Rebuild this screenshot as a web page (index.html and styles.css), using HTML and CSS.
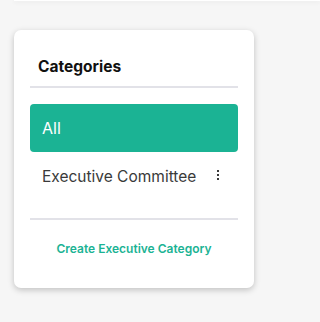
FILE: index.html
```html
<!DOCTYPE html>
<html lang="en">
<head>
<meta charset="utf-8">
<title>Categories</title>
<link rel="stylesheet" href="styles.css">
</head>
<body>
<div class="top-strip"></div>
<section class="card">
  <h2 class="card-title">Categories</h2>
  <ul class="cat-list">
    <li class="cat-item active"><span>All</span></li>
    <li class="cat-item">
      <span>Executive Committee</span>
      <svg class="kebab" width="16" height="16" viewBox="0 0 16 16" aria-hidden="true">
        <rect x="7" y="3" width="2" height="2" fill="#3a3a3a"/>
        <rect x="7" y="7" width="2" height="2" fill="#3a3a3a"/>
        <rect x="7" y="11" width="2" height="2" fill="#3a3a3a"/>
      </svg>
    </li>
  </ul>
  <div class="card-footer">
    <a class="create-link" href="#">Create Executive Category</a>
  </div>
</section>
</body>
</html>
```

FILE: styles.css
```css
html, body {
  margin: 0;
  padding: 0;
}
body {
  background: #f6f6f6;
  font-family: Inter, "Noto Sans", "Liberation Sans", sans-serif;
  min-height: 322px;
  overflow: hidden;
}
.top-strip {
  margin-left: 14px;
  height: 1px;
  background: #ffffff;
  box-shadow: 0 1px 4px rgba(0, 0, 0, 0.12);
}
.card {
  margin: 29px 0 0 14px;
  width: 240px;
  height: 258px;
  box-sizing: border-box;
  background: #ffffff;
  border-radius: 7px;
  box-shadow: 0 2px 6px rgba(0, 0, 0, 0.22);
  padding: 25px 16px 0 16px;
}
.card-title {
  margin: 0;
  padding: 0 0 7px 8px;
  font-size: 15.5px;
  line-height: 24px;
  font-weight: 700;
  color: #111111;
  border-bottom: 2px solid #e2e2e8;
}
.cat-list {
  list-style: none;
  margin: 16px 0 0 0;
  padding: 0 0 18px 0;
  border-bottom: 2px solid #e2e2e8;
}
.cat-item {
  display: flex;
  align-items: center;
  justify-content: space-between;
  height: 48px;
  padding: 0 12px;
  font-size: 15.5px;
  color: #3a3a3a;
  border-radius: 4px;
}
.cat-item.active {
  background: #1bb394;
  color: #ffffff;
  font-size: 16px;
}
.kebab {
  display: block;
  margin-top: -2px;
}
.card-footer {
  padding-top: 17px;
  text-align: center;
}
.create-link {
  font-size: 12px;
  line-height: 16px;
  font-weight: 600;
  color: #1bb394;
  text-decoration: none;
  display: inline-block;
}
```
